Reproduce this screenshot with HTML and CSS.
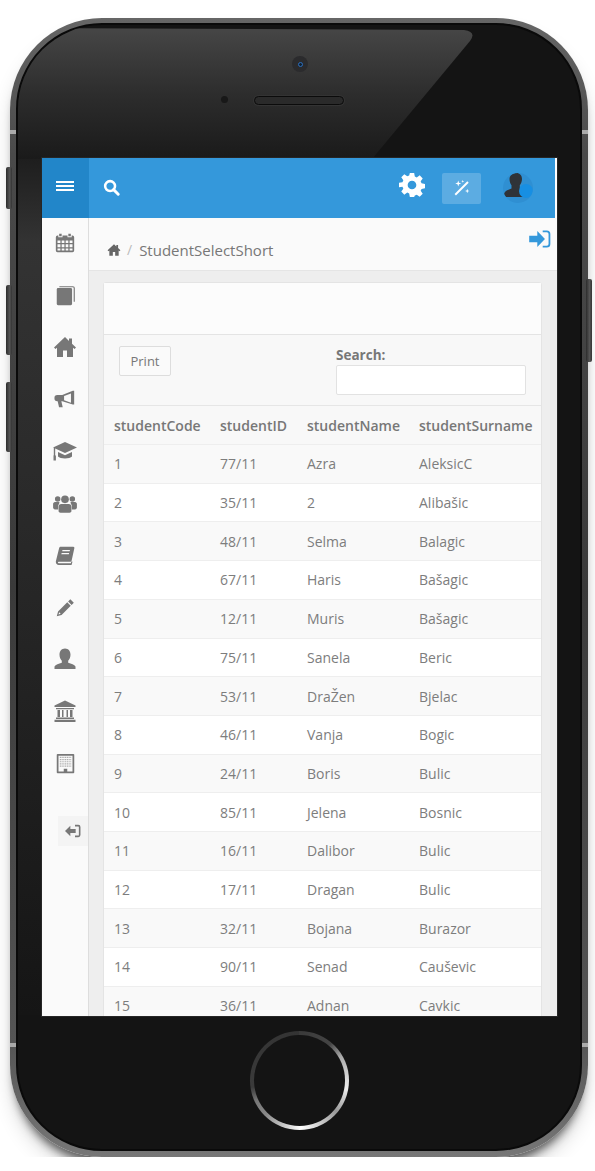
FILE: index.html
```html
<!DOCTYPE html>
<html lang="en">

<head>
    <meta charset="UTF-8">
    <meta name="viewport" content="width=device-width, initial-scale=1.0">
    <title>StudentSelectShort</title>
    <link rel="stylesheet" href="styles.css">
</head>

<body>
    <div class="phone">
        <!-- hardware around the screen -->
        <span class="side-btn btn-mute"></span>
        <span class="side-btn btn-up"></span>
        <span class="side-btn btn-down"></span>
        <span class="side-btn btn-power"></span>
        <span class="band band-tl"></span>
        <span class="band band-tr"></span>
        <span class="band band-bl"></span>
        <span class="band band-br"></span>

        <div class="bezel">
            <span class="bezel-strip"></span>
            <svg class="glare" width="560" height="134" viewBox="0 0 560 134">
                <defs>
                    <linearGradient id="glareFill" x1="0" y1="0" x2="0" y2="1">
                        <stop offset="0" stop-color="#464646" />
                        <stop offset="0.5" stop-color="#2d2d2d" />
                        <stop offset="1" stop-color="#1a1a1a" />
                    </linearGradient>
                </defs>
                <path d="M0 3 L446 5 Q459 7 452 16 L354 134 L0 134 Z" fill="url(#glareFill)" />
            </svg>
            <span class="camera"><i></i></span>
            <span class="sensor"></span>
            <span class="speaker"></span>

            <div class="screen">
                <header class="topbar">
                    <div class="menu-toggle">
                        <span></span><span></span><span></span>
                    </div>
                    <svg class="search-icon" viewBox="0 0 24 24" width="17" height="17">
                        <circle cx="10" cy="10" r="7" fill="none" stroke="#fff" stroke-width="3.6" />
                        <path d="M15 15l6.5 6.5" stroke="#fff" stroke-width="4" stroke-linecap="round" />
                    </svg>
                    <div class="top-actions">
                        <svg class="gear-icon" viewBox="0 0 24 24" width="26" height="26">
                            <path fill="#fff" fill-rule="evenodd" d="M10 1h4l.6 3.2 1.8.8 2.700-1.900 2.800 2.800-1.900 2.700.8 1.800 3.200.6v4l-3.200.6-.8 1.800 1.900 2.700-2.800 2.800-2.700-1.900-1.800.8L14 23h-4l-.6-3.200-1.800-.8-2.700 1.900-2.800-2.800 1.900-2.700-.8-1.800L0 14v-4l3.200-.6.8-1.800-1.900-2.700 2.800-2.800 2.700 1.900 1.800-.8z M12 8a4 4 0 1 0 0 8 4 4 0 0 0 0-8z" />
                        </svg>
                        <div class="wand-btn">
                            <svg viewBox="0 0 24 24" width="18" height="18">
                                <path d="M3 21L20 4" stroke="#fff" stroke-width="2.600" />
                                <path fill="#fff" d="M7 2l1 3 3 1-3 1-1 3-1-3-3-1 3-1z M19 13l.8 2.200 2.200.8-2.200.8-.8 2.200-.8-2.200-2.200-.8 2.200-.8z M13 1l.5 1.500 1.500.5-1.500.5L13 5l-.5-1.500L11 3l1.500-.5z" />
                            </svg>
                        </div>
                        <div class="avatar">
                            <svg viewBox="0 0 30 30" width="30" height="30">
                                <path fill="#2f3338" d="M13.500 0c3.200 0 5.500 2.500 5.500 6 0 2.600-1 4.800-2.200 6.200v3c1.500.6 3 1.300 4 2.200V24H3c-2.200 0-2.500-3.500-1-5 1.500-1.500 4-2.500 6.500-3.500v-3.300C7.300 10.800 6.500 8.600 6.500 6c0-3.500 3.500-6 7-6z" />
                                <circle cx="23" cy="18" r="7" fill="#178fe3" />
                            </svg>
                        </div>
                    </div>
                </header>

                <div class="layout">
                    <nav class="sidebar">
                        <ul>
                            <li>
                                <svg viewBox="0 0 24 24" width="20" height="20">
                                    <path fill="#777" fill-rule="evenodd" d="M5 1h3v3H5z M16 1h3v3h-3z M3 3h1v2h5V3h6v2h5V3h1a2 2 0 0 1 2 2v16a2 2 0 0 1-2 2H3a2 2 0 0 1-2-2V5a2 2 0 0 1 2-2z M3 9v3h3.500V9z M8 9v3h3.300V9z M12.800 9v3H16V9z M17.500 9v3H21V9z M3 13.500V17h3.500v-3.500z M8 13.500V17h3.300v-3.500z M12.800 13.500V17H16v-3.500z M17.500 13.500V17H21v-3.500z M3 18.500V21h3.500v-2.500z M8 18.500V21h3.300v-2.500z M12.800 18.500V21H16v-2.500z M17.500 18.500V21H21v-2.500z" />
                                </svg>
                            </li>
                            <li>
                                <svg viewBox="0 0 24 24" width="21" height="21">
                                    <rect x="2" y="3.500" width="17.500" height="19.500" rx="1.500" fill="#777" />
                                    <path d="M5 2h15.500a1.500 1.500 0 0 1 1.500 1.500V19" fill="none" stroke="#777" stroke-width="1.300" />
                                </svg>
                            </li>
                            <li>
                                <svg viewBox="0 0 24 24" width="24" height="24">
                                    <path fill="#777" d="M12 2L1 12.500l1.500 1.500L4 12.800V22h6v-6.500h4V22h6v-9.200l1.500 1.200 1.500-1.500-4-3.800V3.500h-3v2.600z" />
                                </svg>
                            </li>
                            <li>
                                <svg viewBox="0 0 24 24" width="22" height="22">
                                    <path fill="#777" fill-rule="evenodd" d="M22 3v15h-1.500L9 14.500H8l1.500 6.500H5.500L4 14.500H3.500a3 3 0 0 1-3-3v-1a3 3 0 0 1 3-3H9L20.500 3z M18.500 6L11 8.700v4.600l7.500 2.700z" />
                                </svg>
                            </li>
                            <li>
                                <svg viewBox="0 0 26 24" width="26" height="24">
                                    <path fill="#777" d="M13 3L1 8.500l12 5.500 12-5.500z M6 13v4.500c2 2.500 12 2.500 14 0V13l-7 3.300z" />
                                    <path d="M2.500 9v8" stroke="#777" stroke-width="1.400" />
                                    <rect x="1.500" y="16.500" width="2.400" height="5" fill="#777" />
                                </svg>
                            </li>
                            <li>
                                <svg viewBox="0 0 26 24" width="24" height="22">
                                    <circle cx="5" cy="7.500" r="3" fill="#777" />
                                    <circle cx="21" cy="7.500" r="3" fill="#777" />
                                    <circle cx="13" cy="8" r="4.200" fill="#777" />
                                    <path fill="#777" d="M0 12.500a3 3 0 0 1 3-1.500h4l-.5 2A4 4 0 0 0 5.500 16v3H2c-1 0-2-1-2-2z M26 12.500a3 3 0 0 0-3-1.500h-4l.5 2a4 4 0 0 1 1 3v3H24c1 0 2-1 2-2z M9 13h8c2 0 3 1.500 3 3v5c0 1-1 1.500-2 1.500H8c-1 0-2-.5-2-1.500v-5c0-1.500 1-3 3-3z" />
                                </svg>
                            </li>
                            <li>
                                <svg viewBox="0 0 24 24" width="20" height="20">
                                    <path fill="#777" fill-rule="evenodd" d="M7 2h15c1 0 1.500 1 1.200 2L20 18.500c-.3 1-1 1.500-2 1.500H5c-1 0-1.500.5-1.500 1s.5 1 1.500 1h14l.8-2.500 1.200.5-1.200 4H4.500C2.500 24 1 22.500 1 20.500c0-.5 0-1 .2-1.500L5 3.500C5.300 2.500 6 2 7 2z M9 6l-.4 1.500h9L18 6z M8 9.500l-.4 1.500h9l.4-1.500z" />
                                </svg>
                            </li>
                            <li>
                                <svg viewBox="0 0 24 24" width="21" height="21">
                                    <path fill="#777" fill-rule="evenodd" d="M17.500 2.500l4 4L19 9l-4-4z M14 6l4 4L7.500 20.500 2 22l1.500-5.500z M4.800 17.500l-.8 2.500 2.500-.8z" />
                                </svg>
                            </li>
                            <li>
                                <svg viewBox="0 0 24 24" width="24" height="24">
                                    <path fill="#777" d="M12 1.500c3.500 0 5.500 2.800 5.500 6.300 0 2.500-1 4.700-2.300 6v2c3 1 6.300 2 7.300 3.700V22H1.500v-2.500c1-1.700 4.300-2.700 7.300-3.700v-2c-1.300-1.300-2.300-3.500-2.300-6C6.500 4.300 8.500 1.500 12 1.500z" />
                                </svg>
                            </li>
                            <li>
                                <svg viewBox="0 0 24 24" width="24" height="24">
                                    <path fill="#777" d="M12 1.500L1.500 6.500V8h21V6.500z M3 9h18v1.300H3z M4.500 11h2.500v7H4.500z M9 11h1.500v7H9z M13.500 11H15v7h-1.500z M17 11h2.500v7H17z M3 18.500h18V20H3z M1.500 20.800h21V23h-21z" />
                                </svg>
                            </li>
                            <li>
                                <svg viewBox="0 0 24 24" width="21" height="21">
                                    <path fill="#777" fill-rule="evenodd" d="M3 1h18a1 1 0 0 1 1 1v20a1 1 0 0 1-1 1H3a1 1 0 0 1-1-1V2a1 1 0 0 1 1-1z M4 3v18h6v-3h4v3h6V3z" />
                                    <path d="M5.500 5h13M5.500 7.500h13M5.500 10h13M5.500 12.500h13M5.500 15h13" stroke="#aaa" stroke-width="1.300" stroke-dasharray="1.300 .7" />
                                </svg>
                            </li>
                        </ul>
                        <div class="logout-box">
                            <svg viewBox="0 0 24 20" width="16" height="14">
                                <path fill="#777" d="M0 10l8-8v5h8v6H8v5z" />
                                <path d="M15 2h5a2 2 0 0 1 2 2v12a2 2 0 0 1-2 2h-5" fill="none" stroke="#777" stroke-width="2.400" />
                            </svg>
                        </div>
                    </nav>

                    <main class="main">
                        <div class="crumbs">
                            <svg viewBox="0 0 24 24" width="14" height="14">
                                <path fill="#666" d="M12 2L1 12.500l1.500 1.500L4 12.800V22h6v-6.500h4V22h6v-9.200l1.500 1.200 1.500-1.500-4-3.800V3.500h-3v2.600z" />
                            </svg>
                            <span class="crumb-sep">/</span>
                            <span class="crumb-title">StudentSelectShort</span>
                            <svg class="login-icon" viewBox="0 0 24 20" width="22" height="18">
                                <path fill="#3498db" d="M0 6.500h9V1l8.500 9L9 19v-5.500H0z" />
                                <path d="M15 1.500h4.500a3 3 0 0 1 3 3v11a3 3 0 0 1-3 3H15" fill="none" stroke="#3498db" stroke-width="2" />
                            </svg>
                        </div>

                        <div class="content">
                            <div class="card">
                                <div class="card-head"></div>
                                <div class="toolbar">
                                    <button class="print-btn" type="button">Print</button>
                                    <label class="search-box">Search:
                                        <input type="text">
                                    </label>
                                </div>
                                <table class="students">
                                    <colgroup>
                                        <col class="col-code">
                                        <col class="col-id">
                                        <col class="col-name">
                                        <col class="col-surname">
                                    </colgroup>
                                    <thead>
                                        <tr><th>studentCode</th><th>studentID</th><th>studentName</th><th>studentSurname</th></tr>
                                    </thead>
                                    <tbody>
                                        <tr><td>1</td><td>77/11</td><td>Azra</td><td>AleksicC</td></tr>
                                        <tr><td>2</td><td>35/11</td><td>2</td><td>Alibašic</td></tr>
                                        <tr><td>3</td><td>48/11</td><td>Selma</td><td>Balagic</td></tr>
                                        <tr><td>4</td><td>67/11</td><td>Haris</td><td>Bašagic</td></tr>
                                        <tr><td>5</td><td>12/11</td><td>Muris</td><td>Bašagic</td></tr>
                                        <tr><td>6</td><td>75/11</td><td>Sanela</td><td>Beric</td></tr>
                                        <tr><td>7</td><td>53/11</td><td>DraŽen</td><td>Bjelac</td></tr>
                                        <tr><td>8</td><td>46/11</td><td>Vanja</td><td>Bogic</td></tr>
                                        <tr><td>9</td><td>24/11</td><td>Boris</td><td>Bulic</td></tr>
                                        <tr><td>10</td><td>85/11</td><td>Jelena</td><td>Bosnic</td></tr>
                                        <tr><td>11</td><td>16/11</td><td>Dalibor</td><td>Bulic</td></tr>
                                        <tr><td>12</td><td>17/11</td><td>Dragan</td><td>Bulic</td></tr>
                                        <tr><td>13</td><td>32/11</td><td>Bojana</td><td>Burazor</td></tr>
                                        <tr><td>14</td><td>90/11</td><td>Senad</td><td>Cauševic</td></tr>
                                        <tr><td>15</td><td>36/11</td><td>Adnan</td><td>Cavkic</td></tr>
                                    </tbody>
                                </table>
                            </div>
                        </div>
                    </main>
                </div>
            </div>

            <div class="home-btn"><span></span></div>
        </div>
    </div>
</body>

</html>
```
FILE: styles.css
```css
/* General Styles */
body {
    margin: 0;
    background-color: #fff;
    font-family: 'Open Sans', 'Liberation Sans', sans-serif;
    color: #777;
    overflow: hidden;
}

/* Phone */
.phone {
    position: relative;
    width: 578px;
    height: 1139px;
    margin: 18px 0 0 10px;
    border-radius: 92px;
    background: linear-gradient(180deg, #666 0%, #4a4a4a 12%, #3a3a3a 50%, #555 90%, #777 100%);
    box-shadow: 0 10px 10px -5px rgba(0, 0, 0, 0.6), 0 14px 22px -4px rgba(0, 0, 0, 0.2);
}

.bezel {
    position: absolute;
    top: 5px;
    left: 6px;
    right: 6px;
    bottom: 6px;
    border-radius: 86px;
    background-color: #141414;
    border: 2px solid #0a0a0a;
    overflow: hidden;
}

.bezel-strip {
    position: absolute;
    top: 130px;
    left: 0;
    width: 23px;
    height: 860px;
    background: linear-gradient(180deg, #1d1d1d 0%, #333 10%, #2a2a2a 40%, #151515 100%);
}

.glare {
    position: absolute;
    top: 0;
    left: 0;
}

.camera {
    position: absolute;
    top: 31px;
    left: 274px;
    width: 16px;
    height: 16px;
    border-radius: 50%;
    background-color: #2b2b2d;
    display: flex;
    align-items: center;
    justify-content: center;
}

.camera i {
    width: 3px;
    height: 3px;
    border: 1.5px solid #2d6fbe;
    border-radius: 50%;
    background-color: #123;
}

.sensor {
    position: absolute;
    top: 71px;
    left: 203px;
    width: 7px;
    height: 7px;
    border-radius: 50%;
    background-color: #181818;
}

.speaker {
    position: absolute;
    top: 71px;
    left: 236px;
    width: 88px;
    height: 7px;
    border-radius: 6px;
    background-color: #2a2a2a;
    border: 1.5px solid #0b0b0b;
    box-shadow: 0 0 0 1px #333;
}

.home-btn {
    position: absolute;
    left: 232px;
    top: 1006px;
    width: 99px;
    height: 99px;
    border-radius: 50%;
    display: flex;
    align-items: center;
    justify-content: center;
    background: conic-gradient(#3a3a3a 0deg, #444 40deg, #aaa 60deg, #eee 100deg, #999 130deg, #fff 178deg, #888 225deg, #777 245deg, #3a3a3a 262deg, #333 360deg);
}

.home-btn span {
    width: 91px;
    height: 91px;
    border-radius: 50%;
    background-color: #141414;
}

.side-btn {
    position: absolute;
    width: 6px;
    background: linear-gradient(90deg, #2c2c2c, #555 60%, #333);
    border-radius: 2px;
}

.btn-mute { left: -4px; top: 149px; height: 42px; }
.btn-up { left: -4px; top: 267px; height: 70px; }
.btn-down { left: -4px; top: 364px; height: 70px; }
.btn-power { right: -4px; top: 261px; height: 83px; }

.band {
    position: absolute;
    width: 6px;
    height: 4px;
    background-color: #aaa;
}

.band-tl { left: 0; top: 112px; }
.band-tr { right: 0; top: 112px; }
.band-bl { left: 0; top: 1025px; }
.band-br { right: 0; top: 1025px; }

/* Screen */
.screen {
    position: absolute;
    top: 133px;
    left: 24px;
    width: 515px;
    height: 858px;
    background-color: #fff;
    box-shadow: 0 0 0 1px #262626;
    display: flex;
    flex-direction: column;
    overflow: hidden;
}

.topbar {
    height: 60px;
    flex-shrink: 0;
    margin-right: 2px;
    background-color: #3498db;
    display: flex;
    align-items: center;
}

.menu-toggle {
    width: 47px;
    height: 60px;
    box-sizing: border-box;
    padding: 0 2px 4px 0;
    background-color: #2286c9;
    display: flex;
    flex-direction: column;
    align-items: center;
    justify-content: center;
    gap: 2px;
}

.menu-toggle span {
    width: 18px;
    height: 2px;
    background-color: #fff;
}

.search-icon {
    margin: -2px 0 0 14px;
}

.top-actions {
    margin-left: auto;
    display: flex;
    align-items: center;
    margin-right: 22px;
}

.gear-icon {
    margin-top: -6px;
}

.wand-btn {
    width: 39px;
    height: 31px;
    margin-left: 17px;
    border-radius: 2px;
    background-color: rgba(255, 255, 255, 0.2);
    display: flex;
    align-items: center;
    justify-content: center;
}

.avatar {
    width: 30px;
    height: 30px;
    margin-left: 22px;
    border-radius: 50%;
    background-color: #2f8fd2;
    overflow: hidden;
}

.layout {
    flex: 1;
    display: flex;
    min-height: 0;
}

/* Sidebar */
.sidebar {
    width: 47px;
    flex-shrink: 0;
    background-color: #fafafa;
    border-right: 1px solid #ddd;
    box-sizing: border-box;
    display: flex;
    flex-direction: column;
}

.sidebar ul {
    list-style: none;
    margin: -1px 0 0;
    padding: 0;
}

.sidebar li {
    height: 52px;
    display: flex;
    align-items: center;
    justify-content: center;
}

.logout-box {
    width: 30px;
    height: 30px;
    margin: 27px 0 0 16px;
    background-color: #f4f4f4;
    display: flex;
    align-items: center;
    justify-content: center;
}

/* Main */
.main {
    flex: 1;
    min-width: 0;
    display: flex;
    flex-direction: column;
    background-color: #eee;
}

.crumbs {
    height: 53px;
    flex-shrink: 0;
    box-sizing: border-box;
    padding: 23px 6px 0 18px;
    background-color: #fafafa;
    border-bottom: 1px solid #e5e5e5;
    display: flex;
    align-items: flex-start;
}

.crumbs > svg:first-child {
    margin-top: 2px;
}

.crumb-sep {
    margin-left: 6px;
    font-size: 14px;
    line-height: 18px;
    color: #bbb;
}

.crumb-title {
    margin-left: 7px;
    font-size: 15px;
    line-height: 18px;
    color: #777;
}

.login-icon {
    margin-left: auto;
    margin-top: -11px;
}

.content {
    flex: 1;
    min-height: 0;
    padding: 11px 15px 0 14px;
    overflow: hidden;
}

.card {
    background-color: #fff;
    border: 1px solid #e4e4e4;
    border-radius: 3px;
}

.card-head {
    height: 51px;
    background-color: #fcfcfc;
    border-bottom: 1px solid #e4e4e4;
}

.toolbar {
    height: 70px;
    box-sizing: border-box;
    padding: 11px 15px 0;
    background-color: #f8f8f8;
    display: flex;
    justify-content: space-between;
    align-items: flex-start;
}

.print-btn {
    width: 52px;
    height: 30px;
    padding: 0;
    font-family: inherit;
    font-size: 13px;
    color: #777;
    background-color: #fafafa;
    border: 1px solid #ddd;
    border-radius: 2px;
}

.search-box {
    display: block;
    width: 190px;
    font-size: 13.5px;
    line-height: 18px;
    font-weight: 700;
    color: #777;
}

.search-box input {
    display: block;
    width: 100%;
    height: 30px;
    box-sizing: border-box;
    margin-top: 1px;
    background-color: #fff;
    border: 1px solid #e2e2e2;
    border-radius: 2px;
}

.students {
    width: 100%;
    table-layout: fixed;
    border-collapse: collapse;
    font-size: 14px;
}

.col-code { width: 106px; }
.col-id { width: 87px; }
.col-name { width: 112px; }

.students th {
    height: 38px;
    padding: 0 0 0 10px;
    text-align: left;
    font-weight: 600;
    white-space: nowrap;
    background-color: #f8f8f8;
    border-top: 1px solid #e6e6e6;
}

.students td {
    height: 37.71px;
    padding: 0 0 0 10px;
    color: #7d7d7d;
    border-top: 1px solid #eee;
    white-space: nowrap;
}

.students tbody tr:nth-child(odd) td {
    background-color: #f9f9f9;
}
```
